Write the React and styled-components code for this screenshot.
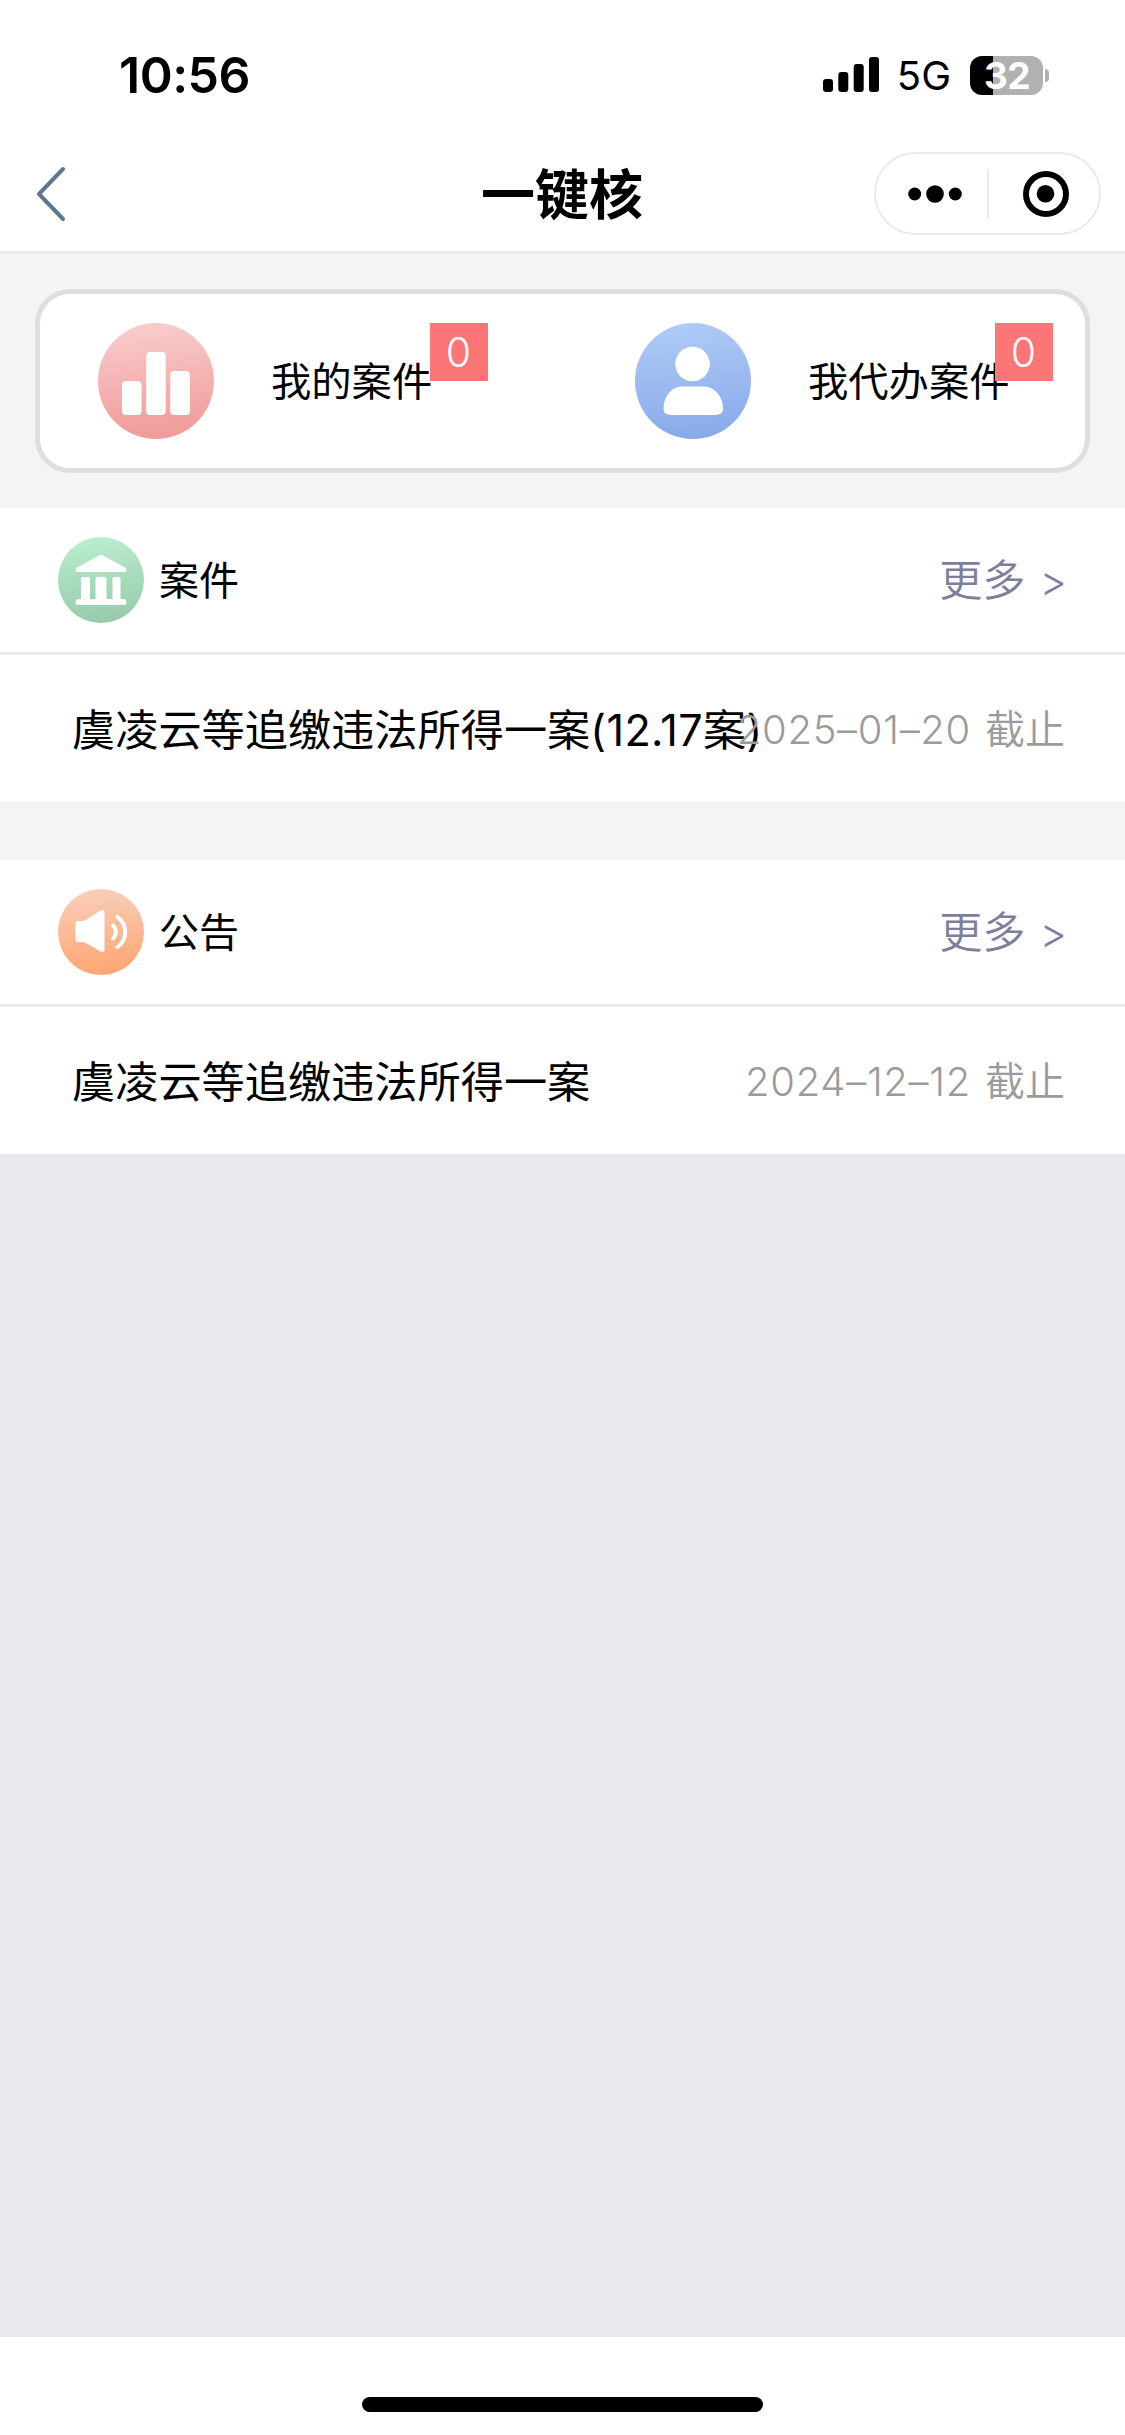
import React from "react";
import styled, { createGlobalStyle } from "styled-components";

const sections = [
  {
    id: "case",
    title: "案件",
    icon: "court",
    rows: [{ name: "虞凌云等追缴违法所得一案", extra: "(12.17案)", date: "2025–01–20" }],
  },
  {
    id: "notice",
    title: "公告",
    icon: "speaker",
    rows: [{ name: "虞凌云等追缴违法所得一案", date: "2024–12–12" }],
  },
];

const Gradient = ({ id, from, to }) => (
  <defs>
    <linearGradient id={id} x1="0.45" y1="0" x2="0.55" y2="1">
      <stop offset="0" stopColor={from} />
      <stop offset="1" stopColor={to} />
    </linearGradient>
  </defs>
);

const ChartIcon = () => (
  <svg width="116" height="116" viewBox="0 0 116 116">
    <Gradient id="chart" from="#f8cccc" to="#f09a98" />
    <circle cx="58" cy="58" r="58" fill="url(#chart)" />
    <g fill="#fff">
      <rect x="24" y="58" width="19.5" height="34" rx="4" />
      <rect x="48.2" y="29" width="19.5" height="63" rx="4" />
      <rect x="72.3" y="48" width="19.5" height="44" rx="4" />
    </g>
  </svg>
);

const UserIcon = () => (
  <svg width="116" height="116" viewBox="0 0 116 116">
    <Gradient id="user" from="#afcaf6" to="#86aae9" />
    <circle cx="58" cy="58" r="58" fill="url(#user)" />
    <circle cx="57.5" cy="41" r="17.3" fill="#fff" />
    <path
      d="M47 63.5H69C79 63.5 88 73 88 86C88 90.500 84 92 77 92H39C32 92 28.500 90.500 28.500 86C28.500 73 37 63.500 47 63.500Z"
      fill="#fff"
    />
  </svg>
);

const CourtIcon = () => (
  <svg width="86" height="86" viewBox="0 0 86 86">
    <Gradient id="court" from="#b9edcd" to="#97c9ab" />
    <circle cx="43" cy="43" r="43" fill="url(#court)" />
    <path
      d="M41.500 18.200Q43 17.300 44.500 18.200L67 30.500Q68.500 31.500 68.500 33Q68.500 35 66.500 35H19.500Q17.500 35 17.500 33Q17.500 31.500 19 30.500Z"
      fill="#fff"
    />
    <path
      d="M25 40H30Q32 40 32 42V62H37.500V42Q37.500 40 39.500 40H46.500Q48.500 40 48.500 42V62H54.500V42Q54.500 40 56.500 40H60.500Q62.500 40 62.500 42V62H66Q68.500 62.500 68.500 65.500Q68.500 68 66 68H20Q17.500 68 17.500 65.500Q17.500 62.500 20 62H23V42Q23 40 25 40Z"
      fill="#fff"
    />
  </svg>
);

const SpeakerIcon = () => (
  <svg width="86" height="86" viewBox="0 0 86 86">
    <Gradient id="speaker" from="#f9ceb9" to="#fea571" />
    <circle cx="43" cy="43" r="43" fill="url(#speaker)" />
    <path
      d="M20 32H24Q26 32 28 30.700L42.500 21.600Q46.500 20 46.500 24V60Q46.500 64 42.500 62.400L28 54Q26 53 24 53H20Q17.500 53 17.500 50.500V34.500Q17.500 32 20 32Z"
      fill="#fff"
    />
    <path
      d="M55 36.500A9 9 0 0 1 55 49.500M59.500 28A18.500 18.500 0 0 1 59.500 58"
      fill="none"
      stroke="#fff"
      strokeWidth="4"
      strokeLinecap="round"
    />
  </svg>
);

const icons = { court: CourtIcon, speaker: SpeakerIcon };

const StatusBar = () => (
  <Status>
    <Clock>10:56</Clock>
    <StatusRight>
      <svg width="56" height="36" viewBox="0 0 56 36">
        <rect x="0" y="22" width="10" height="13" rx="3" />
        <rect x="15.300" y="15" width="10" height="20" rx="3" />
        <rect x="30.700" y="7" width="10" height="28" rx="3" />
        <rect x="46" y="0" width="10" height="35" rx="3" />
      </svg>
      <Network>5G</Network>
      <Battery>32</Battery>
      <BatteryTip />
    </StatusRight>
  </Status>
);

const NavBar = () => (
  <Nav>
    <svg width="32" height="58" viewBox="0 0 32 58">
      <path
        d="M28 4L4 29L28 54"
        fill="none"
        stroke="#627888"
        strokeWidth="4"
        strokeLinecap="round"
        strokeLinejoin="round"
      />
    </svg>
    <h1>一键核</h1>
    <Capsule>
      <svg width="54" height="20" viewBox="0 0 54 20">
        <circle cx="6.700" cy="10" r="6.500" />
        <circle cx="27" cy="10" r="8.800" />
        <circle cx="47.300" cy="10" r="6.500" />
      </svg>
      <CapsuleLine />
      <svg width="46" height="46" viewBox="0 0 46 46">
        <circle cx="23" cy="23" r="20" fill="none" stroke="#000" strokeWidth="6" />
        <circle cx="22.500" cy="22.700" r="8.800" />
      </svg>
    </Capsule>
  </Nav>
);

const Section = ({ section }) => {
  const Icon = icons[section.icon];
  return (
    <Panel>
      <PanelHead>
        <Icon />
        <h2>{section.title}</h2>
        <More>
          更多<span>&gt;</span>
        </More>
      </PanelHead>
      {section.rows.map((row) => (
        <Row key={row.name}>
          <p>
            {row.name}
            <span>{row.extra}</span>
          </p>
          <Deadline>
            <span>{row.date}</span>截止
          </Deadline>
        </Row>
      ))}
    </Panel>
  );
};

const App = () => {
  return (
    <Page>
      <GlobalStyle />
      <StatusBar />
      <NavBar />
      <Summary>
        <SummaryCard>
          <Entry $left={58}>
            <ChartIcon />
            <span>我的案件</span>
            <Badge $left={390}>0</Badge>
          </Entry>
          <Entry $left={67}>
            <UserIcon />
            <span>我代办案件</span>
            <Badge $left={427}>0</Badge>
          </Entry>
        </SummaryCard>
      </Summary>
      <List>
        {sections.map((section) => (
          <Section key={section.id} section={section} />
        ))}
      </List>
      <HomeArea>
        <HomeIndicator />
      </HomeArea>
    </Page>
  );
};

export default App;

const GlobalStyle = createGlobalStyle`
  * {
    box-sizing: border-box;
  }
  body {
    margin: 0;
    background: #e9e8ee;
  }
  svg {
    display: block;
    flex-shrink: 0;
  }
  h1, h2, p {
    margin: 0;
    font-weight: 400;
  }
`;

const Page = styled.div`
  display: flex;
  flex-direction: column;
  width: 1125px;
  height: 2435px;
  overflow: hidden;
  color: #000;
  background: #e9e8ee;
  font-family: Inter, "Noto Sans CJK SC", sans-serif;
  white-space: nowrap;
`;

const Status = styled.div`
  display: flex;
  justify-content: space-between;
  align-items: center;
  height: 150px;
  padding: 0 76px 0 119px;
  background: #fff;
`;

const Clock = styled.div`
  font-size: 50px;
  font-weight: 600;
  letter-spacing: -0.5px;
  line-height: 60px;
`;

const StatusRight = styled.div`
  display: flex;
  align-items: center;
`;

const Network = styled.span`
  margin: 2px 19px 0 18px;
  font-size: 40px;
  line-height: 48px;
`;

const Battery = styled.div`
  width: 73px;
  height: 39px;
  padding-left: 1px;
  border-radius: 12px;
  background: linear-gradient(90deg, #000 23px, #b1b1b1 23px);
  color: #fff;
  font-size: 37px;
  font-weight: 700;
  letter-spacing: -0.5px;
  line-height: 39px;
  text-align: center;
`;

const BatteryTip = styled.div`
  width: 4px;
  height: 13px;
  margin-left: 2px;
  border-radius: 0 5px 5px 0;
  background: #b1b1b1;
`;

const Nav = styled.div`
  display: grid;
  grid-template-columns: 1fr auto 1fr;
  align-items: center;
  height: 104px;
  padding: 0 24px 14px 35px;
  border-bottom: 3px solid #e8e8ee;
  background: #fff;
  h1 {
    padding: 4px 12px 0 0;
    font-size: 54px;
    font-weight: 700;
    line-height: 80px;
  }
`;

const Capsule = styled.div`
  display: flex;
  align-items: center;
  justify-self: end;
  width: 227px;
  height: 83px;
  padding-left: 32px;
  border: 2px solid #e9e9e9;
  border-radius: 42px;
`;

const CapsuleLine = styled.div`
  width: 2px;
  height: 50px;
  margin: 0 34px 0 25px;
  background: #e9e9e9;
`;

const Summary = styled.div`
  padding: 35px;
  background: #f4f4f4;
`;

const SummaryCard = styled.div`
  display: grid;
  grid-template-columns: 528px 1fr;
  height: 184px;
  border: 5px solid #dedede;
  border-radius: 35px;
  background: #fff;
`;

const Entry = styled.div`
  position: relative;
  display: flex;
  align-items: center;
  padding-left: ${(props) => props.$left}px;
  font-size: 40.3px;
  line-height: 60px;
  span {
    margin: 2px 0 0 57px;
  }
`;

const Badge = styled.div`
  position: absolute;
  top: 29px;
  left: ${(props) => props.$left}px;
  width: 58px;
  height: 58px;
  padding-right: 1px;
  background: #fc7677;
  color: #fff;
  font-size: 41px;
  font-weight: 300;
  line-height: 58px;
  text-align: center;
`;

const List = styled.div`
  display: flex;
  flex: 1;
  flex-direction: column;
`;

const Panel = styled.section`
  background: #fff;
  & + & {
    border-top: 58px solid #f4f4f4;
  }
`;

const PanelHead = styled.div`
  display: flex;
  align-items: center;
  height: 147px;
  padding: 0 58px;
  border-bottom: 3px solid #ececec;
  h2 {
    flex: 1;
    margin: 2px 0 0 15px;
    font-size: 40px;
    line-height: 60px;
  }
`;

const More = styled.div`
  display: flex;
  align-items: baseline;
  margin-top: 1px;
  color: #7c809b;
  font-size: 43.2px;
  font-weight: 350;
  line-height: 60px;
  span {
    margin-left: 14px;
    font-size: 42px;
    font-weight: 300;
  }
`;

const Row = styled.div`
  display: flex;
  align-items: center;
  height: 147px;
  padding: 2px 60px 0 72px;
  font-size: 43.2px;
  line-height: 60px;
  p {
    flex: 1;
    min-width: 0;
  }
  p span {
    letter-spacing: 0.4px;
  }
`;

const Deadline = styled.div`
  color: #9b9b9b;
  font-size: 40px;
  font-weight: 350;
  span {
    margin-right: 14px;
    letter-spacing: 0.7px;
  }
`;

const HomeArea = styled.div`
  display: flex;
  justify-content: center;
  height: 98px;
  padding-top: 60px;
  background: #fff;
`;

const HomeIndicator = styled.div`
  width: 401px;
  height: 15px;
  border-radius: 8px;
  background: #000;
`;
